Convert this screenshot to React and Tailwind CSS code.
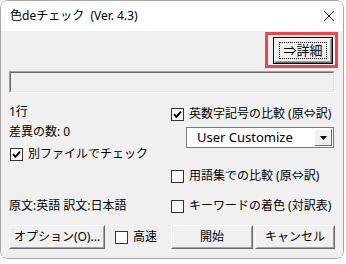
import React from 'react';

const font = { fontFamily: '"Noto Sans", "Noto Sans CJK JP", sans-serif' };

function Check({ checked }) {
  return (
    <span className="flex h-[13px] w-[13px] shrink-0 items-center justify-center border border-[#333] bg-white">
      {checked && (
        <svg width="9" height="9" viewBox="0 0 9 9">
          <path d="M1 4.2 L3.4 6.8 L8 1.6" stroke="#000" strokeWidth="1.9" fill="none" />
        </svg>
      )}
    </span>
  );
}

function CheckRow({ checked, label, className = '' }) {
  return (
    <div className={`flex h-[20px] items-center gap-[5px] ${className}`}>
      <Check checked={checked} />
      <span className="whitespace-nowrap text-[12px] leading-none">{label}</span>
    </div>
  );
}

// 立体ボタン (クラシック)
function Btn({ children, className = '' }) {
  return (
    <div className={`border border-t-white border-l-white border-b-[#696969] border-r-[#696969] bg-[#f0f0f0] ${className}`}>
      <div className="flex h-full items-center justify-center border border-t-[#f0f0f0] border-l-[#f0f0f0] border-b-[#a0a0a0] border-r-[#a0a0a0] text-[12px] leading-none">
        {children}
      </div>
    </div>
  );
}

export default function App() {
  return (
    <div className="h-[264px] w-[346px] bg-white text-black" style={font}>
      <div className="flex h-[259px] w-[344px] flex-col overflow-hidden rounded-[8px] border border-[#a8a8a8]">
        {/* タイトルバー */}
        <div className="flex h-[30px] shrink-0 items-center justify-between bg-white pl-[9px] pr-[8px]">
          <span className="whitespace-pre text-[12px] leading-none">色deチェック  (Ver. 4.3)</span>
          <svg width="12" height="12" viewBox="0 0 12 12">
            <path d="M1 1 L11 11 M11 1 L1 11" stroke="#222" strokeWidth="1" />
          </svg>
        </div>

        <div className="flex flex-1 flex-col bg-[#f0f0f0] px-[8px]">
          {/* 詳細ボタン */}
          <div className="flex justify-end pr-[2px] pt-[6px]">
            <div className="relative">
              <div className="h-[27px] w-[60px] border border-black">
                <Btn className="h-full w-full">
                  <span className="flex h-[17px] w-[48px] items-center justify-center border border-dotted border-black text-[13px]">⇒詳細</span>
                </Btn>
              </div>
              <span className="pointer-events-none absolute -bottom-[4px] -left-[8px] -right-[5px] -top-[5px] border-[3px] border-[#eb4848]" />
            </div>
          </div>

          {/* 進捗欄 */}
          <div className="mt-[7px] h-[22px] border border-t-[#a0a0a0] border-l-[#a0a0a0] border-b-white border-r-white">
            <div className="h-full border border-t-[#696969] border-l-[#696969] border-b-[#e3e3e3] border-r-[#e3e3e3]" />
          </div>

          <div className="flex">
            <div className="flex w-[162px] flex-col">
              <div className="mt-[9px] flex h-[20px] items-center text-[12px] leading-none">1行</div>
              <div className="flex h-[20px] items-center text-[12px] leading-none">差異の数: 0</div>
              <CheckRow checked label="別ファイルでチェック" className="mt-[2px] pl-[1px]" />
              <div className="mt-[32px] flex h-[20px] items-center text-[12px] leading-none">原文:英語 訳文:日本語</div>
            </div>
            <div className="flex flex-1 flex-col">
              <CheckRow checked label="英数字記号の比較 (原⇔訳)" className="mt-[11px]" />
              <div className="ml-[15px] mt-[3px] flex h-[21px] w-[148px] items-center border border-[#7a7a7a] bg-white pl-[10px] pr-[1px]">
                <span className="flex-1 text-[13px] leading-none">User Customize</span>
                <div className="flex h-[17px] w-[18px] items-center justify-center border border-t-white border-l-white border-b-[#696969] border-r-[#696969] bg-[#f0f0f0]">
                  <svg width="7" height="4" viewBox="0 0 7 4">
                    <path d="M0 0 H7 L3.5 4 Z" fill="#000" />
                  </svg>
                </div>
              </div>
              <CheckRow label="用語集での比較 (原⇔訳)" className="mt-[18px]" />
              <CheckRow label="キーワードの着色 (対訳表)" className="mt-[10px]" />
            </div>
          </div>

          {/* 下部ボタン */}
          <div className="mt-[9px] flex items-center">
            <Btn className="h-[24px] w-[96px]">オプション(O)...</Btn>
            <div className="ml-[10px] flex items-center gap-[5px]">
              <Check />
              <span className="text-[12px] leading-none">高速</span>
            </div>
            <div className="ml-auto flex gap-[2px]">
              <Btn className="h-[24px] w-[82px]">開始</Btn>
              <Btn className="h-[24px] w-[80px]">キャンセル</Btn>
            </div>
          </div>
        </div>
      </div>
    </div>
  );
}
